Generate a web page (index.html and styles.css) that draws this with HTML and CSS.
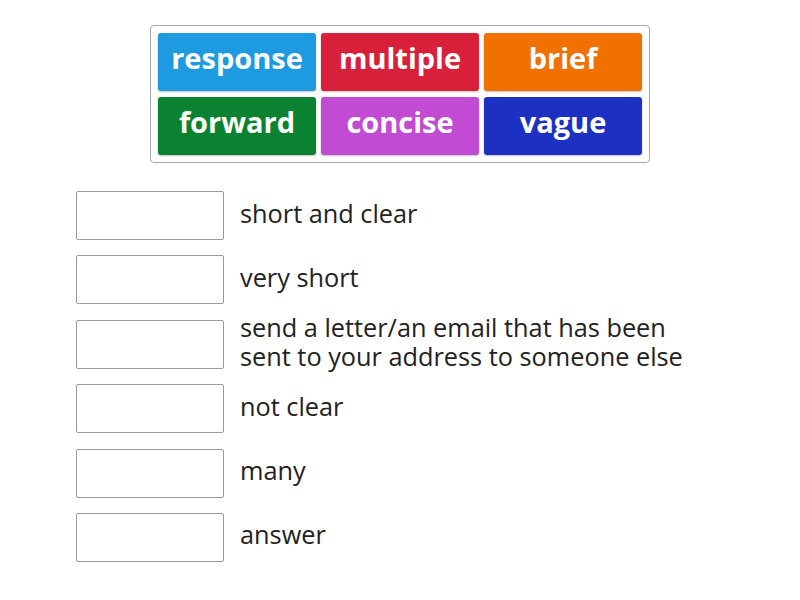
FILE: index.html
```html
<!DOCTYPE html>
<html>
<head>
<meta charset="utf-8">
<link rel="stylesheet" href="styles.css">
</head>
<body>
<div class="page">
  <div class="bank">
    <div class="tile t-blue">response</div>
    <div class="tile t-red">multiple</div>
    <div class="tile t-orange">brief</div>
    <div class="tile t-green">forward</div>
    <div class="tile t-purple">concise</div>
    <div class="tile t-navy">vague</div>
  </div>
  <div class="rows">
    <div class="row"><div class="slot"></div><div class="def">short and clear</div></div>
    <div class="row"><div class="slot"></div><div class="def">very short</div></div>
    <div class="row"><div class="slot"></div><div class="def">send a letter/an email that has been<br>sent to your address to someone else</div></div>
    <div class="row"><div class="slot"></div><div class="def">not clear</div></div>
    <div class="row"><div class="slot"></div><div class="def">many</div></div>
    <div class="row"><div class="slot"></div><div class="def">answer</div></div>
  </div>
</div>
</body>
</html>
```
FILE: styles.css
```css
html, body {
  margin: 0;
  padding: 0;
  background: #fff;
}
body {
  font-family: "Open Sans", "Liberation Sans", sans-serif;
  color: #222;
}
.page {
  width: 800px;
  height: 600px;
  display: flex;
  flex-direction: column;
  align-items: flex-start;
  padding-top: 25px;
  box-sizing: border-box;
}
.bank {
  margin-left: 150px;
  width: 500px;
  height: 138px;
  box-sizing: border-box;
  border: 1px solid #a8a8a8;
  border-radius: 4px;
  padding: 7px;
  display: grid;
  grid-template-columns: 158px 158px 158px;
  grid-template-rows: 58px 58px;
  column-gap: 5px;
  row-gap: 6px;
}
.tile {
  border-radius: 3px;
  color: #fff;
  font-weight: 700;
  font-size: 29px;
  display: flex;
  align-items: center;
  justify-content: center;
  padding-bottom: 9px;
  box-sizing: border-box;
  box-shadow: 0 1px 2px rgba(0,0,0,0.25);
}
.t-blue { background: #1d9ae0; }
.t-red { background: #d9203b; }
.t-orange { background: #f17100; }
.t-green { background: #0a8232; }
.t-purple { background: #c14bd2; }
.t-navy { background: #1c31c2; }
.rows {
  margin-top: 28px;
  margin-left: 76px;
  display: flex;
  flex-direction: column;
  gap: 15.4px;
}
.row {
  display: flex;
  align-items: center;
  height: 49px;
}
.slot {
  width: 148px;
  height: 49px;
  box-sizing: border-box;
  border: 1px solid #9a9a9a;
  border-radius: 2px;
  flex: none;
}
.def {
  margin-left: 16px;
  font-size: 25.3px;
  line-height: 29px;
  color: #222;
  margin-top: -5px;
}
```
